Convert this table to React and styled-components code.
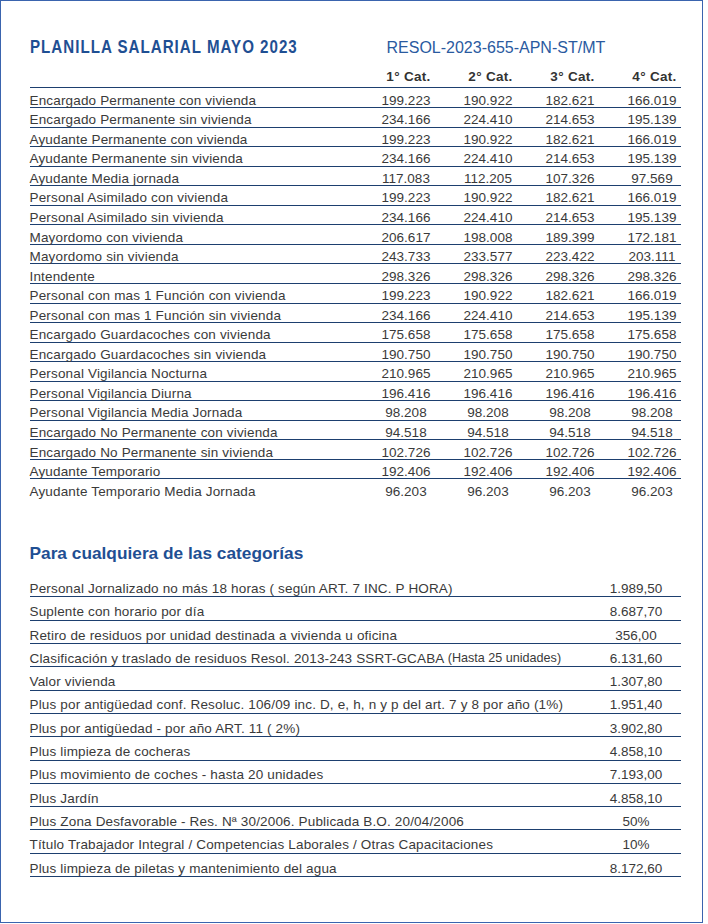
import React from "react";
import styled, { createGlobalStyle } from "styled-components";

const Global = createGlobalStyle`
  html, body { margin: 0; padding: 0; background: #ffffff; }
  body { font-family: "Liberation Sans", Arial, sans-serif; color: #3a3a3a; }
`;

const NAVY = "#1d3f6f";
const BLUE = "#1f4f93";

const Frame = styled.div`
  box-sizing: border-box;
  width: 703px;
  height: 923px;
  border: 1.5px solid #3a64ae;
  padding: 37px 21px 0 28.5px;
  background: #fff;
`;

const Header = styled.header`
  display: grid;
  grid-template-columns: 357px 1fr;
  align-items: baseline;
  height: 18px;
`;

const Title = styled.h1`
  margin: 0;
  font-family: "Liberation Sans", Arial, sans-serif;
  font-weight: 700;
  font-size: 18px;
  line-height: 18px;
  letter-spacing: 1.2px;
  color: ${BLUE};
  white-space: nowrap;
  transform: scaleX(0.84);
  transform-origin: left center;
`;

const Resol = styled.div`
  font-size: 16px;
  line-height: 18px;
  color: #2a5a9f;
  white-space: nowrap;
`;

const CatTable = styled.div`
  margin-top: 9.5px;
  display: flex;
  flex-direction: column;
`;

const CatGrid = styled.div`
  box-sizing: border-box;
  display: grid;
  grid-template-columns: 1fr repeat(4, 58px);
  column-gap: 24px;
  font-size: 13.5px;
  line-height: 14px;
  white-space: nowrap;
`;

const HeadRow = styled(CatGrid)`
  height: 22px;
  padding-top: 4.5px;
  font-weight: 700;
  letter-spacing: 0.3px;
  color: #333;
  border-bottom: 1.3px solid ${NAVY};
`;

const HeadCell = styled.div`
  text-align: center;
  padding-left: 5px;
`;

const Body = styled.div`
  padding-top: 1px;
`;

const DataRow = styled(CatGrid)`
  height: 19.55px;
  padding-top: 5.2px;
  border-bottom: ${(p) => (p.$last ? "none" : `1.3px solid ${NAVY}`)};
`;

const Label = styled.div`
  letter-spacing: 0.16px;
`;

const Num = styled.div`
  text-align: center;
`;

const SectionTitle = styled.h2`
  margin: 44.5px 0 0;
  font-size: 17.3px;
  line-height: 20px;
  font-weight: 700;
  color: ${BLUE};
  white-space: nowrap;
`;

const ExtraTable = styled.div`
  margin-top: 10.7px;
  display: flex;
  flex-direction: column;
`;

const ExtraRow = styled.div`
  box-sizing: border-box;
  display: grid;
  grid-template-columns: 1fr 80px;
  height: 23.3px;
  padding-top: 7.8px;
  font-size: 13.5px;
  line-height: 14px;
  white-space: nowrap;
  border-bottom: 1.3px solid ${NAVY};
`;

const ExtraValue = styled.div`
  text-align: center;
  padding-right: 10px;
`;

const Small = styled.span`
  font-size: 12.6px;
  letter-spacing: 0;
  position: relative;
  top: -1px;
`;

const cats = [
  ["Encargado Permanente con vivienda", "199.223", "190.922", "182.621", "166.019"],
  ["Encargado Permanente sin vivienda", "234.166", "224.410", "214.653", "195.139"],
  ["Ayudante Permanente con vivienda", "199.223", "190.922", "182.621", "166.019"],
  ["Ayudante Permanente sin vivienda", "234.166", "224.410", "214.653", "195.139"],
  ["Ayudante Media jornada", "117.083", "112.205", "107.326", "97.569"],
  ["Personal Asimilado con vivienda", "199.223", "190.922", "182.621", "166.019"],
  ["Personal Asimilado sin vivienda", "234.166", "224.410", "214.653", "195.139"],
  ["Mayordomo con vivienda", "206.617", "198.008", "189.399", "172.181"],
  ["Mayordomo sin vivienda", "243.733", "233.577", "223.422", "203.111"],
  ["Intendente", "298.326", "298.326", "298.326", "298.326"],
  ["Personal con mas 1 Función con vivienda", "199.223", "190.922", "182.621", "166.019"],
  ["Personal con mas 1 Función sin vivienda", "234.166", "224.410", "214.653", "195.139"],
  ["Encargado Guardacoches con vivienda", "175.658", "175.658", "175.658", "175.658"],
  ["Encargado Guardacoches sin vivienda", "190.750", "190.750", "190.750", "190.750"],
  ["Personal Vigilancia Nocturna", "210.965", "210.965", "210.965", "210.965"],
  ["Personal Vigilancia Diurna", "196.416", "196.416", "196.416", "196.416"],
  ["Personal Vigilancia Media Jornada", "98.208", "98.208", "98.208", "98.208"],
  ["Encargado No Permanente con vivienda", "94.518", "94.518", "94.518", "94.518"],
  ["Encargado No Permanente sin vivienda", "102.726", "102.726", "102.726", "102.726"],
  ["Ayudante Temporario", "192.406", "192.406", "192.406", "192.406"],
  ["Ayudante Temporario Media Jornada", "96.203", "96.203", "96.203", "96.203"],
];

const extras = [
  ["Personal Jornalizado no más 18 horas ( según ART. 7 INC. P HORA)", "1.989,50"],
  ["Suplente con horario por día", "8.687,70"],
  ["Retiro de residuos por unidad destinada a vivienda u oficina", "356,00"],
  [
    <>
      Clasificación y traslado de residuos Resol. 2013-243 SSRT-GCABA <Small>(Hasta 25 unidades)</Small>
    </>,
    "6.131,60",
  ],
  ["Valor vivienda", "1.307,80"],
  ["Plus por antigüedad conf. Resoluc. 106/09 inc. D, e, h, n y p del art. 7 y 8 por año (1%)", "1.951,40"],
  ["Plus por antigüedad - por año ART. 11 ( 2%)", "3.902,80"],
  ["Plus limpieza de cocheras", "4.858,10"],
  ["Plus movimiento de coches - hasta 20 unidades", "7.193,00"],
  ["Plus Jardín", "4.858,10"],
  ["Plus Zona Desfavorable - Res. Nª 30/2006. Publicada B.O. 20/04/2006", "50%"],
  ["Título Trabajador Integral / Competencias Laborales / Otras Capacitaciones", "10%"],
  ["Plus limpieza de piletas y mantenimiento del agua", "8.172,60"],
];

export default function App() {
  return (
    <>
      <Global />
      <Frame>
        <Header>
          <Title>PLANILLA SALARIAL MAYO 2023</Title>
          <Resol>RESOL-2023-655-APN-ST/MT</Resol>
        </Header>
        <CatTable>
          <HeadRow>
            <div />
            <HeadCell>1° Cat.</HeadCell>
            <HeadCell>2° Cat.</HeadCell>
            <HeadCell>3° Cat.</HeadCell>
            <HeadCell>4° Cat.</HeadCell>
          </HeadRow>
          <Body>
            {cats.map((r, i) => (
              <DataRow key={i} $last={i === cats.length - 1}>
                <Label>{r[0]}</Label>
                <Num>{r[1]}</Num>
                <Num>{r[2]}</Num>
                <Num>{r[3]}</Num>
                <Num>{r[4]}</Num>
              </DataRow>
            ))}
          </Body>
        </CatTable>
        <SectionTitle>Para cualquiera de las categorías</SectionTitle>
        <ExtraTable>
          {extras.map((r, i) => (
            <ExtraRow key={i}>
              <Label>{r[0]}</Label>
              <ExtraValue>{r[1]}</ExtraValue>
            </ExtraRow>
          ))}
        </ExtraTable>
      </Frame>
    </>
  );
}
